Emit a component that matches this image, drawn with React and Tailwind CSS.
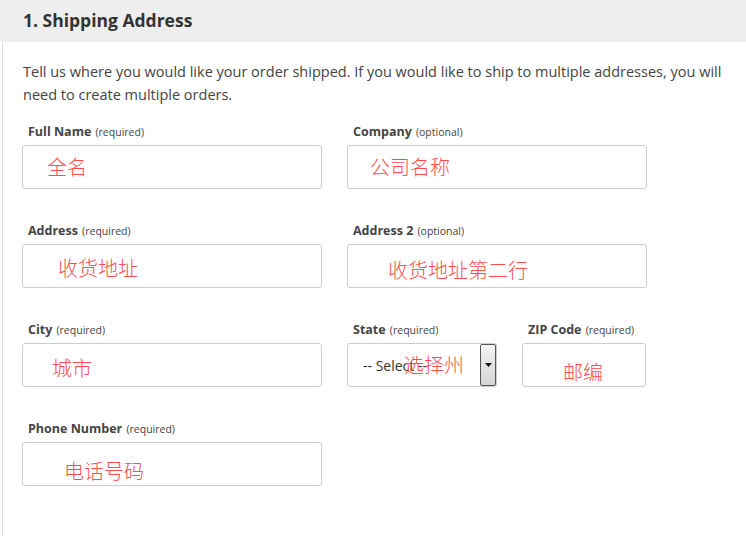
import React from "react";

const fields = [
  [
    { label: "Full Name", note: "(required)", hint: "全名", w: "w-[300px]", pad: "pl-[24px] pt-0" },
    { label: "Company", note: "(optional)", hint: "公司名称", w: "w-[300px]", pad: "pl-[22px] pt-0" },
  ],
  [
    { label: "Address", note: "(required)", hint: "收货地址", w: "w-[300px]", pad: "pl-[35px] pt-[4px]" },
    { label: "Address 2", note: "(optional)", hint: "收货地址第二行", w: "w-[300px]", pad: "pl-[40px] pt-[8px]" },
  ],
];

const Label = ({ label, note }) => (
  <div className="h-[16px] pl-[6px] leading-[16px] text-[#444]">
    <span className="text-[12.5px] font-bold">{label}</span>{" "}
    <span className="text-[10.5px]">{note}</span>
  </div>
);

const Hint = ({ children }) => (
  <span className="text-[20px] leading-[24px] text-[#ff4d4d] font-['Noto_Sans_CJK_SC',sans-serif] font-light">
    {children}
  </span>
);

const Field = ({ label, note, hint, w, pad }) => (
  <div className={`flex flex-col gap-[7px] ${w}`}>
    <Label label={label} note={note} />
    <div className={`h-[44px] flex items-center rounded-[3px] border border-[#cccccc] bg-white ${pad}`}>
      <Hint>{hint}</Hint>
    </div>
  </div>
);

export default function App() {
  return (
    <div className="w-[746px] h-[536px] bg-white font-['Open_Sans',sans-serif] text-[#444] overflow-hidden">
      <div className="h-[42px] bg-[#eeeeee] flex items-center pl-[23px]">
        <h2 className="text-[17.5px] font-bold text-[#333] leading-none">1. Shipping Address</h2>
      </div>
      <div className="ml-[2px] border-l border-[#dddddd] h-[494px] pl-[19px] pt-[18px]">
        <p className="pl-[1px] w-[712px] text-[14.5px] leading-[23px] text-[#444]">
          Tell us where you would like your order shipped. If you would like to ship to multiple addresses, you will
          need to create multiple orders.
        </p>
        <div className="mt-[16px] flex flex-col gap-[32px]">
          {fields.map((row, i) => (
            <div key={i} className="flex gap-[25px]">
              {row.map((f) => (
                <Field key={f.label} {...f} />
              ))}
            </div>
          ))}
          <div className="flex gap-[25px]">
            <Field label="City" note="(required)" hint="城市" w="w-[300px]" pad="pl-[29px] pt-[6px]" />
            <div className="flex gap-[25px]">
              <div className="flex flex-col gap-[7px] w-[150px]">
                <Label label="State" note="(required)" />
                <div className="relative h-[44px] flex items-center rounded-[3px] border border-[#cccccc] bg-white">
                  <span className="pl-[15px] text-[14px] text-[#333]">-- Select --</span>
                  <span className="absolute left-[56px] top-[9px]">
                    <Hint>选择州</Hint>
                  </span>
                  <div className="absolute right-0 top-0 bottom-0 w-[16px] border border-[#555] rounded-[2px] bg-gradient-to-b from-[#f4f4f4] to-[#d4d4d4] flex items-center justify-center">
                    <svg width="7" height="4" viewBox="0 0 7 4">
                      <path d="M0 0h7L3.5 4z" fill="#111" />
                    </svg>
                  </div>
                </div>
              </div>
              <Field label="ZIP Code" note="(required)" hint="邮编" w="w-[124px]" pad="pl-[40px] pt-[14px]" />
            </div>
          </div>
          <div className="flex">
            <Field label="Phone Number" note="(required)" hint="电话号码" w="w-[300px]" pad="pl-[41px] pt-[14px]" />
          </div>
        </div>
      </div>
    </div>
  );
}
